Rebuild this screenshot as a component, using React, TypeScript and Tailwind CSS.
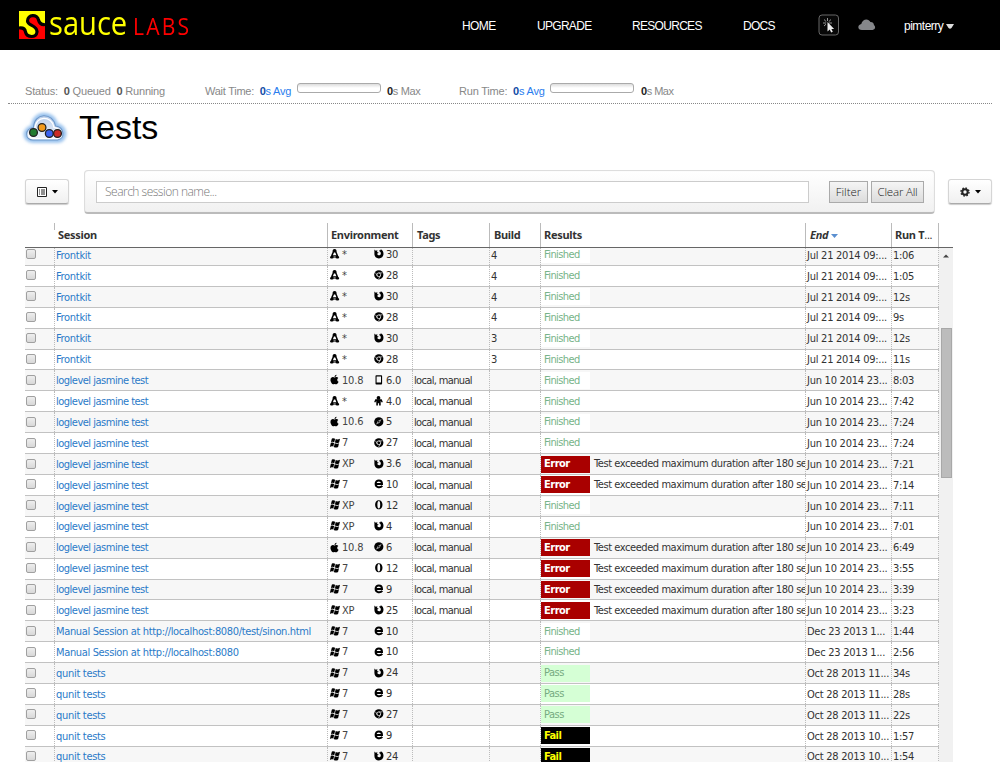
import React from "react";
import { FaApple } from "react-icons/fa";

type Row = [string, string, string, string, string, string, string, string, string, string];

// session, os, os version, browser, browser version, tags, build, result, end, run time
const LM = "local, manual";
const LJ = "loglevel jasmine test";
const JUL = "Jul 21 2014 09:...";
const JUN = "Jun 10 2014 23...";
const ROWS: Row[] = [
  ["Frontkit", "linux", "*", "firefox", "30", "", "4", "Finished", JUL, "1:06"],
  ["Frontkit", "linux", "*", "chrome", "28", "", "4", "Finished", JUL, "1:05"],
  ["Frontkit", "linux", "*", "firefox", "30", "", "4", "Finished", JUL, "12s"],
  ["Frontkit", "linux", "*", "chrome", "28", "", "4", "Finished", JUL, "9s"],
  ["Frontkit", "linux", "*", "firefox", "30", "", "3", "Finished", JUL, "12s"],
  ["Frontkit", "linux", "*", "chrome", "28", "", "3", "Finished", JUL, "11s"],
  [LJ, "apple", "10.8", "phone", "6.0", LM, "", "Finished", JUN, "8:03"],
  [LJ, "linux", "*", "android", "4.0", LM, "", "Finished", JUN, "7:42"],
  [LJ, "apple", "10.6", "safari", "5", LM, "", "Finished", JUN, "7:24"],
  [LJ, "windows", "7", "chrome", "27", LM, "", "Finished", JUN, "7:24"],
  [LJ, "windows", "XP", "firefox", "3.6", LM, "", "Error", JUN, "7:21"],
  [LJ, "windows", "7", "ie", "10", LM, "", "Error", JUN, "7:14"],
  [LJ, "windows", "XP", "opera", "12", LM, "", "Finished", JUN, "7:11"],
  [LJ, "windows", "XP", "firefox", "4", LM, "", "Finished", JUN, "7:01"],
  [LJ, "apple", "10.8", "safari", "6", LM, "", "Error", JUN, "6:49"],
  [LJ, "windows", "7", "opera", "12", LM, "", "Error", JUN, "3:55"],
  [LJ, "windows", "7", "ie", "9", LM, "", "Error", JUN, "3:39"],
  [LJ, "windows", "XP", "firefox", "25", LM, "", "Error", JUN, "3:23"],
  ["Manual Session at http://localhost:8080/test/sinon.html", "windows", "7", "ie", "10", "", "", "Finished", "Dec 23 2013 1...", "1:44"],
  ["Manual Session at http://localhost:8080", "windows", "7", "ie", "10", "", "", "Finished", "Dec 23 2013 1...", "2:56"],
  ["qunit tests", "windows", "7", "firefox", "24", "", "", "Pass", "Oct 28 2013 11...", "34s"],
  ["qunit tests", "windows", "7", "ie", "9", "", "", "Pass", "Oct 28 2013 11...", "28s"],
  ["qunit tests", "windows", "7", "chrome", "27", "", "", "Pass", "Oct 28 2013 11...", "22s"],
  ["qunit tests", "windows", "7", "ie", "9", "", "", "Fail", "Oct 28 2013 10...", "1:57"],
  ["qunit tests", "windows", "7", "firefox", "24", "", "", "Fail", "Oct 28 2013 10...", "1:54"],
];

function Glyph({ name }: { name: string }) {
  const p = { width: 10, height: 10, viewBox: "0 0 10 10", className: "shrink-0 overflow-visible" };
  switch (name) {
    case "apple":
      return <FaApple size={11} className="-ml-px shrink-0" />;
    case "linux":
      return (
        <svg {...p}>
          <path d="M4.600 0C3 0 2.600 1.200 2.600 2.400 2.600 3.800 1.300 5 1.100 6.800L0 8c0 1.500 1.500 2 3 1.300.8-.3 2.200-.3 3.200 0C7.700 10 9.200 9.500 9.200 8L8.100 6.800C7.900 5 6.600 3.800 6.600 2.400 6.600 1.200 6.200 0 4.600 0Z" />
          <path d="M4 3.400h1.200l1.200 2.800H2.900Z" fill="#fff" />
          <path d="M3.500 8h2.200" stroke="#fff" strokeWidth=".9" />
        </svg>
      );
    case "windows":
      return (
        <svg {...p}>
          <path d="M1.800.7C3 0 4 .2 5.100.8L4.300 4.300C3.200 3.700 2.200 3.600.9 4.300ZM5.700 1.100c1.200.6 2.800.5 4.300-.4L9.100 4.400c-1.300.8-2.900.8-4.200.2ZM.8 5c1-.6 2.200-.5 3.300.1L3.300 8.800C2.300 8.200 1.300 8.200-.1 8.900ZM4.700 5.300c1.200.6 2.800.6 4.300-.1L8.100 8.900c-1.400.8-2.900.8-4.200.1Z" />
        </svg>
      );
    case "firefox":
      return (
        <svg {...p}>
          <path d="M.4.500 1.700 1.700 3.400 1.300 3.100 2.900 4.800 3.700 3.300 4.600C3.200 6.700 6.500 7 6.800 4.800 7 3.500 6.300 2.600 5.300 2.300L5.600.9 6.500 1.300 6.800.300C8.600 1 9.600 3 9.500 5 9.400 7.700 7.500 9.400 4.900 9.400 2.200 9.400.4 7.500.4 4.900Z" />
        </svg>
      );
    case "chrome":
      return (
        <svg {...p}>
          <circle cx="4.800" cy="4.800" r="4.600" />
          <circle cx="4.800" cy="4.800" r="1.900" fill="none" stroke="#fff" strokeWidth=".8" />
          <path d="M4.800 2.900h3.600M3.200 5.800 1.500 2.700M6.400 5.800 4.600 9" stroke="#ddd" strokeWidth=".7" />
        </svg>
      );
    case "safari":
      return (
        <svg {...p}>
          <circle cx="4.800" cy="4.800" r="4.600" />
          <path d="M7.600 2 5.700 5.700 2 7.600 3.900 3.900Z" fill="#aaa" />
          <circle cx="4.800" cy="4.800" r=".8" />
        </svg>
      );
    case "ie":
      return (
        <svg {...p}>
          <path d="M2 4.900H8C8 .4 1.600.400 1.600 4.800 1.600 8.900 6.400 9.100 8.300 6.900" fill="none" stroke="currentColor" strokeWidth="2" />
        </svg>
      );
    case "opera":
      return (
        <svg {...p}>
          <path fillRule="evenodd" d="M4.800.3c2.300 0 3.700 1.900 3.700 4.500S7.100 9.300 4.800 9.300 1.100 7.400 1.100 4.800 2.500.3 4.800.3Zm0 .8c-1 0-1.400 1.400-1.400 3.700S3.800 8.500 4.800 8.500s1.400-1.400 1.400-3.700S5.800 1.100 4.800 1.100Z" />
        </svg>
      );
    case "android":
      return (
        <svg {...p}>
          <circle cx="4.500" cy="1.900" r="1.900" />
          <path d="M1.300 3.300h6.400l1.100 2.600-1 .5L6.700 4.900v4.600H5.100V7.300H3.900v2.200H2.300V4.900L1.200 6.400l-1-.5Z" />
        </svg>
      );
    default:
      return (
        <svg {...p}>
          <path fillRule="evenodd" d="M2.300.2h5q.8 0 .8.800v7.800q0 .8-.8.800h-5q-.8 0-.8-.8V1q0-.8.8-.8Zm.3 1.300v6.100H7V1.500Z" />
        </svg>
      );
  }
}

const CELL = "box-border h-full shrink-0 border-r border-dotted border-[#bbb] overflow-hidden whitespace-nowrap flex items-center pl-px";

function Result({ result }: { result: string }) {
  const base = "-ml-px w-[49px] h-[17px] pt-px pl-[3px] shrink-0 flex items-center ";
  if (result === "Error")
    return (
      <>
        <span className={base + "bg-[#a90000] text-white font-bold tracking-[-0.5px]"}>Error</span>
        <span className="ml-[4px] pt-px tracking-[-0.43px]">Test exceeded maximum duration after 180 se</span>
      </>
    );
  if (result === "Fail") return <span className={base + "bg-black text-[#ff0] font-bold tracking-[-0.6px]"}>Fail</span>;
  if (result === "Pass") return <span className={base + "bg-[#d5ffd5] text-[#76aa80] tracking-[-0.5px]"}>Pass</span>;
  return <span className={base + "bg-white text-[#76b388] tracking-[-0.6px]"}>Finished</span>;
}

function SessionRow({ r, odd }: { r: Row; odd: boolean }) {
  const name = r[0];
  const spacing = name.startsWith("Manual") ? "tracking-[-0.35px]" : name.startsWith("log") ? "tracking-[-0.5px]" : "tracking-[-0.3px]";
  return (
    <div className={"flex h-[20.92px] border-b border-[#c2c2c2] " + (odd ? "bg-[#f7f7f7]" : "bg-white")}>
      <div className={CELL + " w-[30px] pb-px"}>
        <span className="h-[10px] w-[10px] rounded-[2px] border border-[#a0a0a0] bg-linear-to-b from-[#eee] to-[#d8d8d8]" />
      </div>
      <div className={CELL + " w-[273px] pt-[2px] text-[#2a7ac8] " + spacing}>{name}</div>
      <div className={CELL + " w-[85px] pb-px text-black"}>
        <span className="ml-px flex w-[44px] items-center gap-[2px]">
          <Glyph name={r[1]} />
          <span className="pt-[2px] tracking-[-0.2px] text-[#444]">{r[2]}</span>
        </span>
        <span className="flex items-center gap-[2px]">
          <Glyph name={r[3]} />
          <span className="pt-[2px] tracking-[-0.2px] text-[#333]">{r[4]}</span>
        </span>
      </div>
      <div className={CELL + " w-[77px] pt-[2px] tracking-[-0.65px]"}>{r[5]}</div>
      <div className={CELL + " w-[51px] pt-[2px]"}>{r[6]}</div>
      <div className={CELL + " w-[265px]"}>
        <Result result={r[7]} />
      </div>
      <div className={CELL + " w-[86px] pt-[2px] tracking-[-0.25px]"}>{r[8]}</div>
      <div className={CELL + " w-[47px] pt-[2px] tracking-[-0.3px]"}>{r[9]}</div>
    </div>
  );
}

const HEAD = "box-border h-full shrink-0 border-r border-[#bbb] pt-px flex items-center whitespace-nowrap";

function Meter() {
  return <span className="h-[10px] w-[84px] rounded-[3px] border border-[#aaa] bg-linear-to-b from-[#ddd] to-white to-50%" />;
}

export default function App() {
  return (
    <div className="flex h-[762px] w-[1000px] flex-col overflow-hidden bg-white font-['Liberation_Sans',sans-serif] text-black">
      <header className="flex h-[50px] shrink-0 items-start bg-black text-[12px] text-white">
        <svg className="ml-[19px] mt-[11px] shrink-0" width="26" height="28" viewBox="0 0 26 28">
          <path d="M0 0h26v28H0Z" fill="#f00" />
          <path d="M26 13.500C22 14 20.500 12.500 19.500 9 18.500 3 8.500 3 8.500 10 8.500 15 18.500 14 18 21 17.500 27 8 27 6.500 21 6 17.500 4 16.500 0 17V0H26Z" fill="#ff0" />
          <path d="M26 13.500C22 14 20.500 12.500 19.500 9 18.500 3 8.500 3 8.500 10 8.500 15 18.500 14 18 21 17.500 27 8 27 6.500 21 6 17.500 4 16.500 0 17" fill="none" stroke="#000" strokeWidth="3.200" />
        </svg>
        <div className="ml-[4px] flex h-[48px] w-[141px] items-baseline font-['Open_Sans',sans-serif] leading-[46px]">
          <span className="w-[84px] origin-left scale-x-[0.91] text-[32px] text-[#ff0]">sauce</span>
          <span className="origin-left scale-x-[0.88] text-[24px] tracking-[2.500px] text-[#f00]">LABS</span>
        </div>
        <nav className="ml-[272px] flex h-[51px] items-center tracking-[-0.7px]">
          <span className="w-[75px] tracking-[-0.6px]">HOME</span>
          <span className="w-[95px]">UPGRADE</span>
          <span className="w-[111px]">RESOURCES</span>
          <span className="w-[75px]">DOCS</span>
        </nav>
        <svg className="mt-[14px] shrink-0" width="22" height="22" viewBox="0 0 22 22">
          <rect x="1" y="1" width="19.500" height="20" rx="3" fill="#080808" stroke="#666" />
          <path d="M9.500 8v9.500l2.200-1.900 1.500 3 1.600-.8-1.400-2.900h2.700Z" fill="#eee" />
          <path d="M9.500 4v3M6 5.500l2.300 2.200M13 5.500l-2.300 2.200M5 9h3M11 9h3M6 12l2-1.800" stroke="#bbb" strokeWidth=".8" />
        </svg>
        <svg className="ml-[18px] mt-[18px] shrink-0" width="18" height="14" viewBox="0 0 18 14">
          <path d="M4 12C-1 12-.5 6.500 3.300 6 4 1 10.500-.3 12.400 4c3 0 3.600 2 3.500 3 2 1.500 1.500 4.500-1.300 5Z" fill="#85878a" />
        </svg>
        <span className="ml-[28px] flex h-[52px] items-center gap-[3px] tracking-[-0.5px]">
          pimterry
          <svg width="8" height="5" viewBox="0 0 8 5">
            <path d="M0 0h8L5.500 4q-1.500 1.500-3 0Z" fill="#ddd" />
          </svg>
        </span>
      </header>

      <div className="mx-[8px] flex h-[54px] shrink-0 items-start border-b border-dotted border-[#888] pl-[17px] pt-[34px] text-[11px] leading-[14px] text-[#888]">
        <span className="w-[180px] whitespace-pre tracking-[-0.18px]">
          Status:{"  "}<b className="text-[#555]">0</b> Queued{"  "}<b className="text-[#555]">0</b> Running
        </span>
        <span className="w-[92px] whitespace-pre tracking-[-0.25px]">
          Wait Time:{"  "}<span className="text-[#2a7dee]"><b className="text-[#124ba5]">0</b>s Avg</span>
        </span>
        <span className="-mt-px flex w-[90px]"><Meter /></span>
        <span className="w-[72px] tracking-[-0.35px]"><b className="text-[#222]">0</b>s Max</span>
        <span className="w-[91px] whitespace-pre tracking-[-0.2px]">
          Run Time:{"  "}<span className="text-[#2a7dee]"><b className="text-[#124ba5]">0</b>s Avg</span>
        </span>
        <span className="-mt-px flex w-[91px]"><Meter /></span>
        <span className="tracking-[-0.5px]"><b className="text-[#222]">0</b>s Max</span>
      </div>

      <div className="flex h-[66px] shrink-0 items-start pl-[21px]">
        <svg className="mt-[5px] shrink-0" width="48" height="38" viewBox="0 0 48 38">
          <defs>
            <filter id="glow" x="-30%" y="-30%" width="160%" height="160%">
              <feGaussianBlur stdDeviation="1.500" />
            </filter>
            <linearGradient id="sky" x1="0" y1="0" x2="0" y2="1">
              <stop offset="0" stopColor="#b9cdea" />
              <stop offset="1" stopColor="#f2f6fc" />
            </linearGradient>
          </defs>
          <path d="M12 32C3 32 1 20 12 18 12 2 33 2 35 16c11 1 11 15 2 16Z" fill="#9cc4ee" stroke="#9cc4ee" strokeWidth="4" filter="url(#glow)" />
          <path d="M12 31C4 31 3 20 12.500 18.500 13 3 32 3 34.500 17c9 1 10 13 2 14Z" fill="url(#sky)" stroke="#6d97c8" strokeWidth="1.100" />
          <path d="M13 29.500C6 29 6 21 14 20c0-14 17-14 19-1.500 7 .5 8 10 3 11Z" fill="none" stroke="#fff" strokeWidth="1.200" />
          <g stroke="#222" strokeWidth="1.300">
            <circle cx="12.500" cy="23.500" r="3.900" fill="#227b30" />
            <circle cx="21" cy="18.500" r="3.900" fill="#f29a1c" />
            <circle cx="28.300" cy="24.500" r="3.900" fill="#3a62f0" />
            <circle cx="36.500" cy="24.500" r="3.900" fill="#cc2c25" />
          </g>
        </svg>
        <h1 className="ml-[10px] mt-[3px] text-[34px] leading-[40px]">Tests</h1>
      </div>

      <div className="flex h-[44px] shrink-0 items-start pl-[25px]">
        <div className="mt-[9px] flex h-[25px] w-[44px] items-center justify-center gap-[5px] rounded-[3px] border border-[#d5d5d5] border-b-[#aaa] bg-linear-to-b from-white to-[#f0f0f0] shadow-[0_1px_1px_#ccc]">
          <svg width="10" height="10" viewBox="0 0 10 10">
            <path d="M.5.500h9v9h-9Z" fill="#fff" stroke="#222" />
            <path d="M2 3h1M4 3h4M2 5h1M4 5h4M2 7h1M4 7h4" stroke="#222" />
          </svg>
          <svg width="6" height="4" viewBox="0 0 6 4"><path d="M0 0h6L3 3.500Z" /></svg>
        </div>
        <div className="ml-[15px] flex h-[44px] w-[851px] items-start rounded-[4px] border border-[#ddd] border-b-2 border-b-[#bbb] bg-linear-to-b from-white to-[#f1f1f1] pl-[11px] pt-[10px] font-['Open_Sans',sans-serif] text-[12px] font-light shadow-[inset_0_0_1px_#ddd]">
          <div className="flex h-[22px] w-[713px] items-center border border-[#ccc] bg-white pl-[8px] tracking-[-0.5px] text-[#777]">Search session name...</div>
          <div className="ml-[20px] flex h-[22px] w-[39px] items-center justify-center border border-[#aaa] bg-linear-to-b from-[#f5f5f5] to-[#dcdcdc] text-[11.500px] text-[#222]">Filter</div>
          <div className="ml-[3px] flex h-[22px] w-[53px] items-center justify-center border border-[#aaa] bg-linear-to-b from-[#f5f5f5] to-[#dcdcdc] text-[11.500px] tracking-[-0.2px] text-[#222]">Clear All</div>
        </div>
        <div className="ml-[13px] mt-[9px] flex h-[25px] w-[44px] items-center justify-center gap-[5px] rounded-[3px] border border-[#d5d5d5] border-b-[#aaa] bg-linear-to-b from-white to-[#f0f0f0] shadow-[0_1px_1px_#ccc]">
          <svg width="10" height="10" viewBox="0 0 10 10" fill="none" stroke="#222">
            <circle cx="5" cy="5" r="2.700" strokeWidth="2" />
            <circle cx="5" cy="5" r="4" strokeWidth="1.400" strokeDasharray="1.570 1.570" />
          </svg>
          <svg width="6" height="4" viewBox="0 0 6 4"><path d="M0 0h6L3 3.500Z" /></svg>
        </div>
      </div>

      <div className="ml-[25px] mt-[9px] flex h-[25px] w-[928px] shrink-0 border-b border-[#666] font-['Noto_Sans',sans-serif] text-[11px] font-bold tracking-[-0.3px] text-[#333]">
        <div className="h-[7px] w-[30px] shrink-0 border-r border-[#bbb]" />
        <div className={HEAD + " w-[273px] pl-[3px]"}>Session</div>
        <div className={HEAD + " w-[85px] pl-[3px]"}>Environment</div>
        <div className={HEAD + " w-[77px] pl-[4px]"}>Tags</div>
        <div className={HEAD + " w-[51px] pl-[4px]"}>Build</div>
        <div className={HEAD + " w-[265px] pl-[3px]"}>Results</div>
        <div className={HEAD + " w-[86px] gap-[3px] pl-[4px]"}>
          <i>End</i>
          <svg width="7" height="4" viewBox="0 0 7 4"><path d="M0 0h7L3.500 4Z" fill="#5a8fd0" /></svg>
        </div>
        <div className={HEAD + " w-[47px] pl-[3px]"}>Run T<span className="font-normal">...</span></div>
      </div>

      <div className="ml-[25px] flex h-[514px] w-[928px] shrink-0 overflow-hidden">
        <div className="-mt-[3px] w-[914px] shrink-0 font-['DejaVu_Sans_Condensed','DejaVu_Sans',sans-serif] text-[11px] text-[#333] [font-stretch:condensed]">
          {ROWS.map((r, i) => (
            <SessionRow key={i} r={r} odd={i % 2 === 0} />
          ))}
        </div>
        <div className="flex h-full w-[14px] shrink-0 flex-col items-center bg-[#f1f1f1]">
          <svg className="mt-[6px]" width="6" height="4" viewBox="0 0 6 4"><path d="M0 3.500h6L3 .5Z" fill="#444" /></svg>
          <div className="mt-[70px] h-[150px] w-[11px] border border-[#a8a8a8] bg-[#bcbcbc]" />
        </div>
      </div>
    </div>
  );
}
